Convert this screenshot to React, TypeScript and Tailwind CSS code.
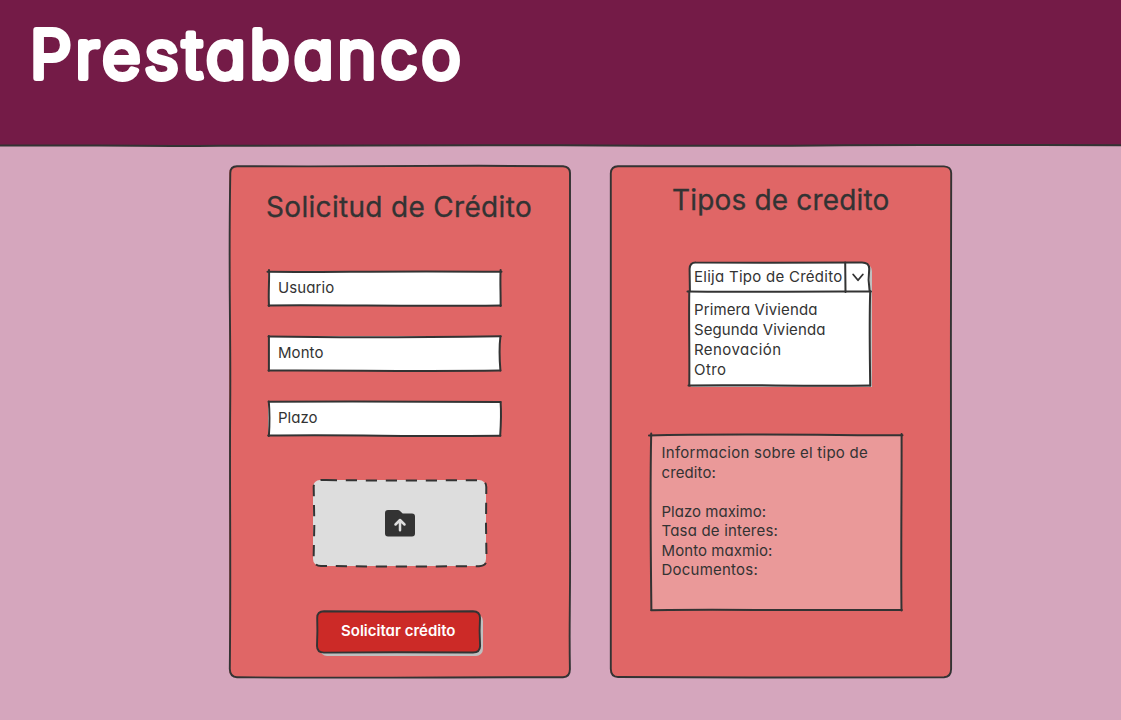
import { useLayoutEffect, useRef, useState } from "react";
import type { ReactNode } from "react";

const INK = "#333333";

/** A line of text whose letter spacing is tuned so that it fills the given width. */
function FitText({ text, width, className = "" }: { text: string; width: number; className?: string }) {
  const ref = useRef<HTMLSpanElement>(null);
  const [spacing, setSpacing] = useState(0);
  useLayoutEffect(() => {
    if (ref.current) {
      const natural = ref.current.getBoundingClientRect().width - spacing * text.length;
      setSpacing((width - natural) / text.length);
    }
  }, [text, width]);
  return (
    <span className={`block ${className}`}>
      <span ref={ref} className="inline-block whitespace-pre" style={{ letterSpacing: `${spacing}px` }}>
        {text}
      </span>
    </span>
  );
}

/** Hand-drawn pen strokes laid over a box. */
function Pen({ paths, width = 2 }: { paths: string[]; width?: number }) {
  return (
    <svg
      className="pointer-events-none absolute inset-0 h-full w-full overflow-visible"
      fill="none"
      stroke={INK}
      strokeWidth={width}
      strokeLinecap="round"
      strokeLinejoin="round"
      aria-hidden="true"
    >
      {paths.map((d) => (
        <path key={d} d={d} />
      ))}
    </svg>
  );
}

function Card({ children, outline }: { children: ReactNode; outline: string }) {
  return (
    <section className="relative h-[511px] w-[341px] shrink-0 rounded-[7px] bg-[#e06666]">
      <Pen paths={[outline]} width={1.9} />
      {children}
    </section>
  );
}

function Field({ label, width, paths }: { label: string; width: number; paths: string[] }) {
  return (
    <div className="relative h-[34px] w-[232px] bg-white pl-[10px] pt-[7px]">
      <Pen paths={paths} />
      <FitText text={label} width={width} className="text-[15px] leading-[20px]" />
    </div>
  );
}

const loanTypes = [
  { name: "Primera Vivienda", width: 123.5 },
  { name: "Segunda Vivienda", width: 131.5 },
  { name: "Renovación", width: 87.5 },
  { name: "Otro", width: 32.5 },
];

const infoLines = [
  { text: "Informacion sobre el tipo de", width: 206.5 },
  { text: "credito:", width: 54.5 },
  { text: " ", width: 4 },
  { text: "Plazo maximo:", width: 104.5 },
  { text: "Tasa de interes:", width: 116.5 },
  { text: "Monto maxmio:", width: 111 },
  { text: "Documentos:", width: 96.5 },
];

export default function App() {
  return (
    <div className="h-[720px] w-[1121px] overflow-hidden bg-[#d5a6bd] font-['Inter',sans-serif] text-[#333333] [font-feature-settings:'cv11','ss03']">
      <header className="relative h-[146px] bg-[#741b47] pl-[30px] pt-[14px]">
        <h1>
          <svg className="block h-[80px] w-[440px] overflow-visible" role="img" aria-label="Prestabanco">
            <text
              x="0"
              y="64.2"
              textLength="430.5"
              fill="#ffffff"
              stroke="#ffffff"
              strokeWidth="6"
              strokeLinejoin="round"
              strokeLinecap="round"
              className="text-[66px] font-light"
            >
              Prestabanco
            </text>
          </svg>
        </h1>
        <Pen paths={["M-2 145.5 L60 145.4 C120 145.7 160 146.2 220 145.7 S430 144.9 560 145.3 S700 146.4 820 145.4 S1000 145.6 1040 144.9 L1123 145.2"]} />
      </header>

      <main className="flex gap-[40px] pl-[229px] pt-[20px]">
        <Card outline="M8 .3 C90 .5 180 .4 250 -.2 L334 .3 Q341 .8 341 7 C342 150 340.5 250 341 350 S340 450 340.9 503 Q341 511 334 511.3 C240 511 120 512.3 8 511.2 Q1 511 .8 503 C2 400 .5 320 1.2 240 S-.6 120 1.3 7 Q1.3 .6 8 .3Z">
          <h2 className="pl-[37px] pt-[21px]">
            <FitText text="Solicitud de Crédito" width={266} className="text-[28px] leading-[40px] [-webkit-text-stroke:0.3px_#333333]" />
          </h2>
          <div className="flex flex-col gap-[31px] pl-[39px] pt-[44px]">
            <Field
              label="Usuario"
              width={56.5}
              paths={[
                "M-.5 .8 C60 1.4 120 -.2 233.5 .8",
                "M1 -1 C1.5 10 .2 20 1 35",
                "M232.6 -1 C232 12 232.8 22 232.6 35",
                "M.5 34.4 C80 33.8 140 35.6 232.8 34.4",
              ]}
            />
            <Field
              label="Monto"
              width={45.5}
              paths={["M.5 .6 C80 1.9 140 1.6 232.8 .3", "M.9 0 L.9 34.8", "M232.4 .5 C231 12 231.4 22 232.4 34.5", "M.5 34.6 C80 34.2 140 35.6 232.4 34.6"]}
            />
            <Field
              label="Plazo"
              width={39.5}
              paths={["M.6 .7 C80 .1 140 .5 232.6 1", "M.8 .5 C1.6 10 1.8 20 .9 35", "M232.6 1 C233.4 12 233 22 232.2 34.5", "M.2 34.6 C80 33.6 140 35.6 232.4 34.8"]}
            />
          </div>
          <button className="relative ml-[84px] mt-[45px] flex h-[86px] w-[173px] items-center justify-center rounded-[7px] bg-[#dddddd]" aria-label="Subir">
            <svg className="absolute inset-0 h-full w-full overflow-visible" fill="none" stroke={INK} strokeWidth="2" aria-hidden="true">
              <path
                strokeDasharray="11.2 8.8"
                d="M12.8 .1 L80 .6 L166 .2 Q173.3 .5 173.3 7 L173 45 L173.5 80 Q173.3 86 166 86.2 L80 86.6 L8 86 Q1 86 .6 79 L1.3 45 L.7 7 Q.8 .3 8 .1Z"
              />
            </svg>
            <svg className="h-[27px] w-[30px]" viewBox="0 0 30 27" aria-hidden="true">
              <path fill={INK} d="M3 0H12.6Q14.2 0 15.3 1.2L17.7 3.6H27Q30 3.6 30 6.6V23.6Q30 26.6 27 26.6H3Q0 26.6 0 23.6V3Q0 0 3 0Z" />
              <path fill="none" stroke="#dddddd" strokeWidth="2.5" strokeLinecap="round" strokeLinejoin="round" d="M15 20.3V10.2M10.5 14.5L15 10L19.5 14.5" />
            </svg>
          </button>
          <button className="relative ml-[88px] mt-[45px] flex h-[42px] w-[163px] items-center rounded-[7px] bg-[#cc2a27] pb-[3px] pl-[24px] text-white shadow-[3px_3px_0_#bfbfbf]">
            <Pen width={1.9} paths={["M7 .2 L80 .8 L156 .2 Q163 .4 163 7 L162.6 20 L163.1 35 Q163 41.5 156 41.5 L80 41.2 L7 41.6 Q0 41.5 0 35 L.4 20 L.2 7 Q0 .4 7 .2Z"]} />
            <FitText text="Solicitar crédito" width={114.5} className="text-[15px] font-semibold leading-[20px]" />
          </button>
        </Card>

        <Card outline="M8 .3 C90 -.7 170 .3 334 .4 Q341 .8 341.2 7 L340.9 180 C341.8 300 341.2 420 341.1 503 Q341 511 334 511.3 L140 511.5 L8 511 Q1 511 .8 503 C.8 400 1.6 240 .8 7 Q1.3 .6 8 .3Z">
          <h2 className="pl-[62px] pt-[14px]">
            <FitText text="Tipos de credito" width={217.5} className="text-[28px] leading-[40px] [-webkit-text-stroke:0.3px_#333333]" />
          </h2>
          <div className="relative ml-[79px] mt-[42px] h-[123px] w-[181px] rounded-t-[7px] bg-white shadow-[2px_2px_0_#bfbfbf]">
            <Pen
              paths={[
                "M.9 29 L.6 7 Q.8 .3 7 .5 L80 .7 L173 .4 Q180.3 .5 180.2 7 L179.6 18 L180.6 29",
                "M-1.5 29.6 C60 30.2 120 29.2 182 29.6",
                "M156.2 .5 L156.5 30",
                "M.3 29.3 C-.3 60 .7 90 .3 123.6",
                "M181.2 29.3 C180.2 60 180.8 90 181.2 123.6",
                "M-.5 123.4 C60 122.6 120 124.4 181 123.4",
              ]}
            />
            <div className="flex h-[29px] pl-[5px] pt-[5px]">
              <FitText text="Elija Tipo de Crédito" width={148.5} className="w-[158px] text-[15px] leading-[20px]" />
              <svg className="mt-[6px] h-[9px] w-[13px]" viewBox="0 0 13 9" fill="none" stroke={INK} strokeWidth="1.8" strokeLinecap="round" strokeLinejoin="round" aria-hidden="true">
                <path d="M1.2 1.5L6 7.3L10.8 1.5" />
              </svg>
            </div>
            <ul className="pl-[5px] pt-[9px] text-[15px] leading-[20px]">
              {loanTypes.map((type) => (
                <li key={type.name}>
                  <FitText text={type.name} width={type.width} />
                </li>
              ))}
            </ul>
          </div>
          <div className="relative ml-[41px] mt-[50px] h-[175px] w-[251px] bg-[#ea9999] pl-[10.5px] pt-[8px]">
            <Pen
              paths={[
                "M-2 .4 C70 -1.4 150 -.2 251.5 .3",
                "M.2 -1.5 C-.9 50 -.3 120 .4 175",
                "M250.6 -1 C250.8 50 249.8 120 250.5 175.5",
                "M.2 175.2 C50 174.2 120 175.4 250.8 175",
              ]}
            />
            {infoLines.map((line) => (
              <FitText key={line.text} text={line.text} width={line.width} className="h-[19.5px] text-[15px] leading-[19.5px]" />
            ))}
          </div>
        </Card>
      </main>
    </div>
  );
}
